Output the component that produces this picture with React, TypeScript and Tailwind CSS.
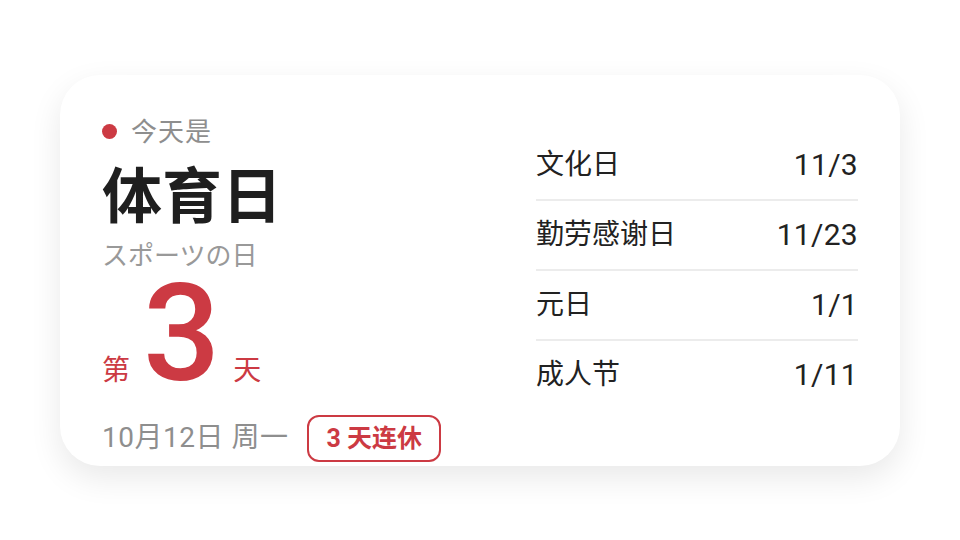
const holidays = [
  { name: '文化日', date: '11/3' },
  { name: '勤劳感谢日', date: '11/23' },
  { name: '元日', date: '1/1' },
  { name: '成人节', date: '1/11' },
];

const font = { fontFamily: 'Roboto, "Noto Sans CJK SC", sans-serif' };

export default function App() {
  return (
    <div className="flex h-[540px] w-[960px] items-center justify-center bg-white" style={font}>
      <div className="flex h-[391px] w-[840px] rounded-[40px] bg-white shadow-[0_12px_32px_rgba(0,0,0,0.09)]">
        {/* today */}
        <div className="flex flex-1 flex-col pl-[42px] pt-[40px]">
          <div className="flex items-center gap-[14px] text-[26px] leading-[34px] text-[#8e8e8e]">
            <span className="h-[15px] w-[15px] rounded-full bg-[#cc3a43]" />
            <span className="tracking-[1px]">今天是</span>
          </div>
          <div className="mt-[16px] text-[60px] font-bold leading-[66px] text-[#1f1f1f]">体育日</div>
          <div className="mt-[9px] text-[26px] leading-[32px] text-[#999999]">スポーツの日</div>
          <div className="mt-[12px] flex items-baseline gap-[13px] text-[#cc3a43]">
            <span className="text-[28px] leading-[30px]">第</span>
            <span className="text-[136px] font-medium leading-[100px]">3</span>
            <span className="text-[28px] leading-[30px]">天</span>
          </div>
          <div className="mt-[29px] flex items-center gap-[19px]">
            <span className="text-[28px] leading-[36px] tracking-[0.5px] text-[#8e8e8e]">10月12日 周一</span>
            <span className="rounded-[12px] border-2 border-[#cc3a43] px-[17px] py-[6px] text-[25px] font-bold leading-[31px] text-[#cc3a43]">
              3 天连休
            </span>
          </div>
        </div>

        {/* upcoming holidays */}
        <div className="flex w-[364px] flex-col justify-center pr-[42px]">
          {holidays.map((h, i) => (
            <div
              key={h.name}
              className={`flex items-center justify-between py-[16px] ${i < holidays.length - 1 ? 'border-b-2 border-[#ececec]' : ''}`}
            >
              <span className="text-[28px] leading-[36px] text-[#222222]">{h.name}</span>
              <span className="text-[30px] leading-[36px] tracking-[0.3px] text-[#222222]">{h.date}</span>
            </div>
          ))}
        </div>
      </div>
    </div>
  );
}
